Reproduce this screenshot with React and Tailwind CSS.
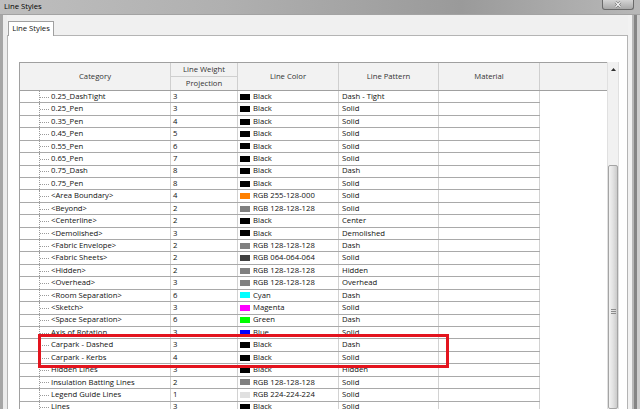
import React from "react";

const rows = [
  ["0.25_DashTight", "3", "#000000", "Black", "Dash - Tight"],
  ["0.25_Pen", "3", "#000000", "Black", "Solid"],
  ["0.35_Pen", "4", "#000000", "Black", "Solid"],
  ["0.45_Pen", "5", "#000000", "Black", "Solid"],
  ["0.55_Pen", "6", "#000000", "Black", "Solid"],
  ["0.65_Pen", "7", "#000000", "Black", "Solid"],
  ["0.75_Dash", "8", "#000000", "Black", "Dash"],
  ["0.75_Pen", "8", "#000000", "Black", "Solid"],
  ["<Area Boundary>", "4", "#ff8000", "RGB 255-128-000", "Solid"],
  ["<Beyond>", "2", "#808080", "RGB 128-128-128", "Solid"],
  ["<Centerline>", "2", "#000000", "Black", "Center"],
  ["<Demolished>", "3", "#000000", "Black", "Demolished"],
  ["<Fabric Envelope>", "2", "#808080", "RGB 128-128-128", "Dash"],
  ["<Fabric Sheets>", "2", "#404040", "RGB 064-064-064", "Solid"],
  ["<Hidden>", "2", "#808080", "RGB 128-128-128", "Hidden"],
  ["<Overhead>", "3", "#808080", "RGB 128-128-128", "Overhead"],
  ["<Room Separation>", "6", "#00ffff", "Cyan", "Dash"],
  ["<Sketch>", "3", "#ff00ff", "Magenta", "Solid"],
  ["<Space Separation>", "6", "#00ff00", "Green", "Dash"],
  ["Axis of Rotation", "3", "#0000ff", "Blue", "Solid"],
  ["Carpark - Dashed", "3", "#000000", "Black", "Dash"],
  ["Carpark - Kerbs", "4", "#000000", "Black", "Solid"],
  ["Hidden Lines", "3", "#000000", "Black", "Hidden"],
  ["Insulation Batting Lines", "2", "#808080", "RGB 128-128-128", "Solid"],
  ["Legend Guide Lines", "1", "#e0e0e0", "RGB 224-224-224", "Solid"],
  ["Lines", "3", "#000000", "Black", "Solid"],
];

function Row({ r }) {
  return (
    <div className="flex h-[12.43px] shrink-0">
      <div className="flex w-[520px] border-b border-[#a9a9a9]">
        <div className="flex w-[151px] border-r border-[#d2d2d2]">
          <div className="w-[19px]" />
          <div className="relative w-[12px] border-l border-dotted border-[#9a9a9a]">
            <div className="absolute left-0 right-[2px] top-1/2 border-t border-dotted border-[#9a9a9a]" />
          </div>
          <div className="flex items-center leading-none whitespace-nowrap">{r[0]}</div>
        </div>
        <div className="flex w-[67px] items-center pl-[2px] border-r border-[#d2d2d2] leading-none">{r[1]}</div>
        <div className="flex w-[101px] items-center pl-[2px] border-r border-[#d2d2d2] leading-none whitespace-nowrap">
          <span className="w-[10px] h-[6px] mr-[3px] shrink-0" style={{ backgroundColor: r[2] }} />
          {r[3]}
        </div>
        <div className="flex w-[100px] items-center pl-[3px] border-r border-[#d2d2d2] leading-none whitespace-nowrap">{r[4]}</div>
        <div className="w-[101px] border-r border-[#d2d2d2]" />
      </div>
      <div className="flex-1" />
    </div>
  );
}

export default function App() {
  return (
    <div className="relative w-[640px] h-[409px] overflow-hidden flex flex-col bg-[#f0f0f0] text-[#111111] text-[7.7px] font-['Open_Sans',sans-serif]">
      {/* Title bar */}
      <div className="relative h-[15px] shrink-0 flex items-start pt-[2px] pl-[4px] bg-[linear-gradient(90deg,#bebebe_0%,#b0b0b0_35%,#9a9a9a_72%,#a8a8a8_85%,#b8b8b8_100%)] border-b border-[#a3a3a3]">
        <span className="leading-[9px] text-black">Line Styles</span>
        <div className="absolute right-[6px] top-0 w-[32px] h-[10px] rounded-b-[3px] border border-t-0 border-[#6a6a6a] bg-gradient-to-b from-[#d4d4d4] to-[#a8a8a8] flex items-center justify-center">
          <svg width="8" height="7" viewBox="0 0 8 7">
            <path d="M1.5 1 L6.5 6 M6.5 1 L1.5 6" stroke="#5a5a5a" strokeWidth="2.2" />
            <path d="M1.5 1 L6.5 6 M6.5 1 L1.5 6" stroke="#ffffff" strokeWidth="1.1" />
          </svg>
        </div>
      </div>

      <div className="flex flex-1 min-h-0">
        {/* left frame */}
        <div className="w-[3px] bg-[#a6a6a6]" />
        <div className="w-[4px] bg-[#ececec]" />

        {/* content */}
        <div className="w-[621px] flex flex-col min-h-0">
          <div className="h-[6px] shrink-0" />
          <div className="flex shrink-0 relative z-10 -mb-px">
            <div className="ml-[1px] w-[46px] h-[15px] bg-white border border-b-0 border-[#a0a0a0] flex items-center justify-center leading-none">
              Line Styles
            </div>
          </div>
          <div className="flex-1 min-h-0 bg-white border border-b-0 border-[#b4b4b4] pl-[11px] pt-[26px] overflow-hidden">
            <div className="flex w-[600px] h-full">
              {/* main grid */}
              <div className="w-[588px] flex flex-col border-l border-[#a0a0a0]">
                {/* header */}
                <div className="flex h-[29px] shrink-0 bg-[#f2f2f2] border-t border-b border-[#a0a0a0] text-[#333333] leading-none">
                  <div className="w-[151px] border-r border-[#cfcfcf] flex items-center justify-center">Category</div>
                  <div className="w-[67px] border-r border-[#cfcfcf] flex flex-col">
                    <div className="h-[14px] border-b border-[#cfcfcf] flex items-center justify-center">Line Weight</div>
                    <div className="flex-1 flex items-center justify-center">Projection</div>
                  </div>
                  <div className="w-[101px] border-r border-[#cfcfcf] flex items-center justify-center">Line Color</div>
                  <div className="w-[100px] border-r border-[#cfcfcf] flex items-center justify-center">Line Pattern</div>
                  <div className="w-[101px] border-r border-[#cfcfcf] flex items-center justify-center">Material</div>
                  <div className="flex-1" />
                </div>
                {/* body */}
                <div className="flex flex-col">
                  {rows.map((r, i) => (
                    <Row key={i} r={r} />
                  ))}
                </div>
              </div>

              {/* scrollbar */}
              <div className="w-[12px] flex flex-col bg-[#f1f1f1] border-l border-r border-[#e0e0e0]">
                <div className="h-[14px] shrink-0 flex items-center justify-center">
                  <svg width="5" height="3" viewBox="0 0 5 3">
                    <path d="M0 3 L2.5 0 L5 3 Z" fill="#303030" />
                  </svg>
                </div>
                <div className="h-[89px] shrink-0" />
                <div className="flex-1 rounded-[2px] border border-[#a4a4a4] bg-gradient-to-r from-[#f2f2f2] via-[#e2e2e2] to-[#cbcbcb] flex flex-col items-center">
                  <div className="mt-[143px] flex flex-col gap-[1px]">
                    <div className="w-[5px] h-px bg-[#8c8c8c]" />
                    <div className="w-[5px] h-px bg-[#8c8c8c]" />
                    <div className="w-[5px] h-px bg-[#8c8c8c]" />
                  </div>
                </div>
              </div>
            </div>
          </div>
        </div>

        {/* right frame */}
        <div className="w-[4px] bg-[#f2f2f2]" />
        <div className="w-[2px] bg-[#b8b8b8]" />
        <div className="w-[3px] bg-[#858585]" />
        <div className="w-[3px] bg-[#cdcdcd]" />
      </div>

      {/* highlight rectangle */}
      <div className="absolute left-[38px] top-[334px] w-[411px] h-[34px] border-[3px] border-[#e3141e]" />
    </div>
  );
}
